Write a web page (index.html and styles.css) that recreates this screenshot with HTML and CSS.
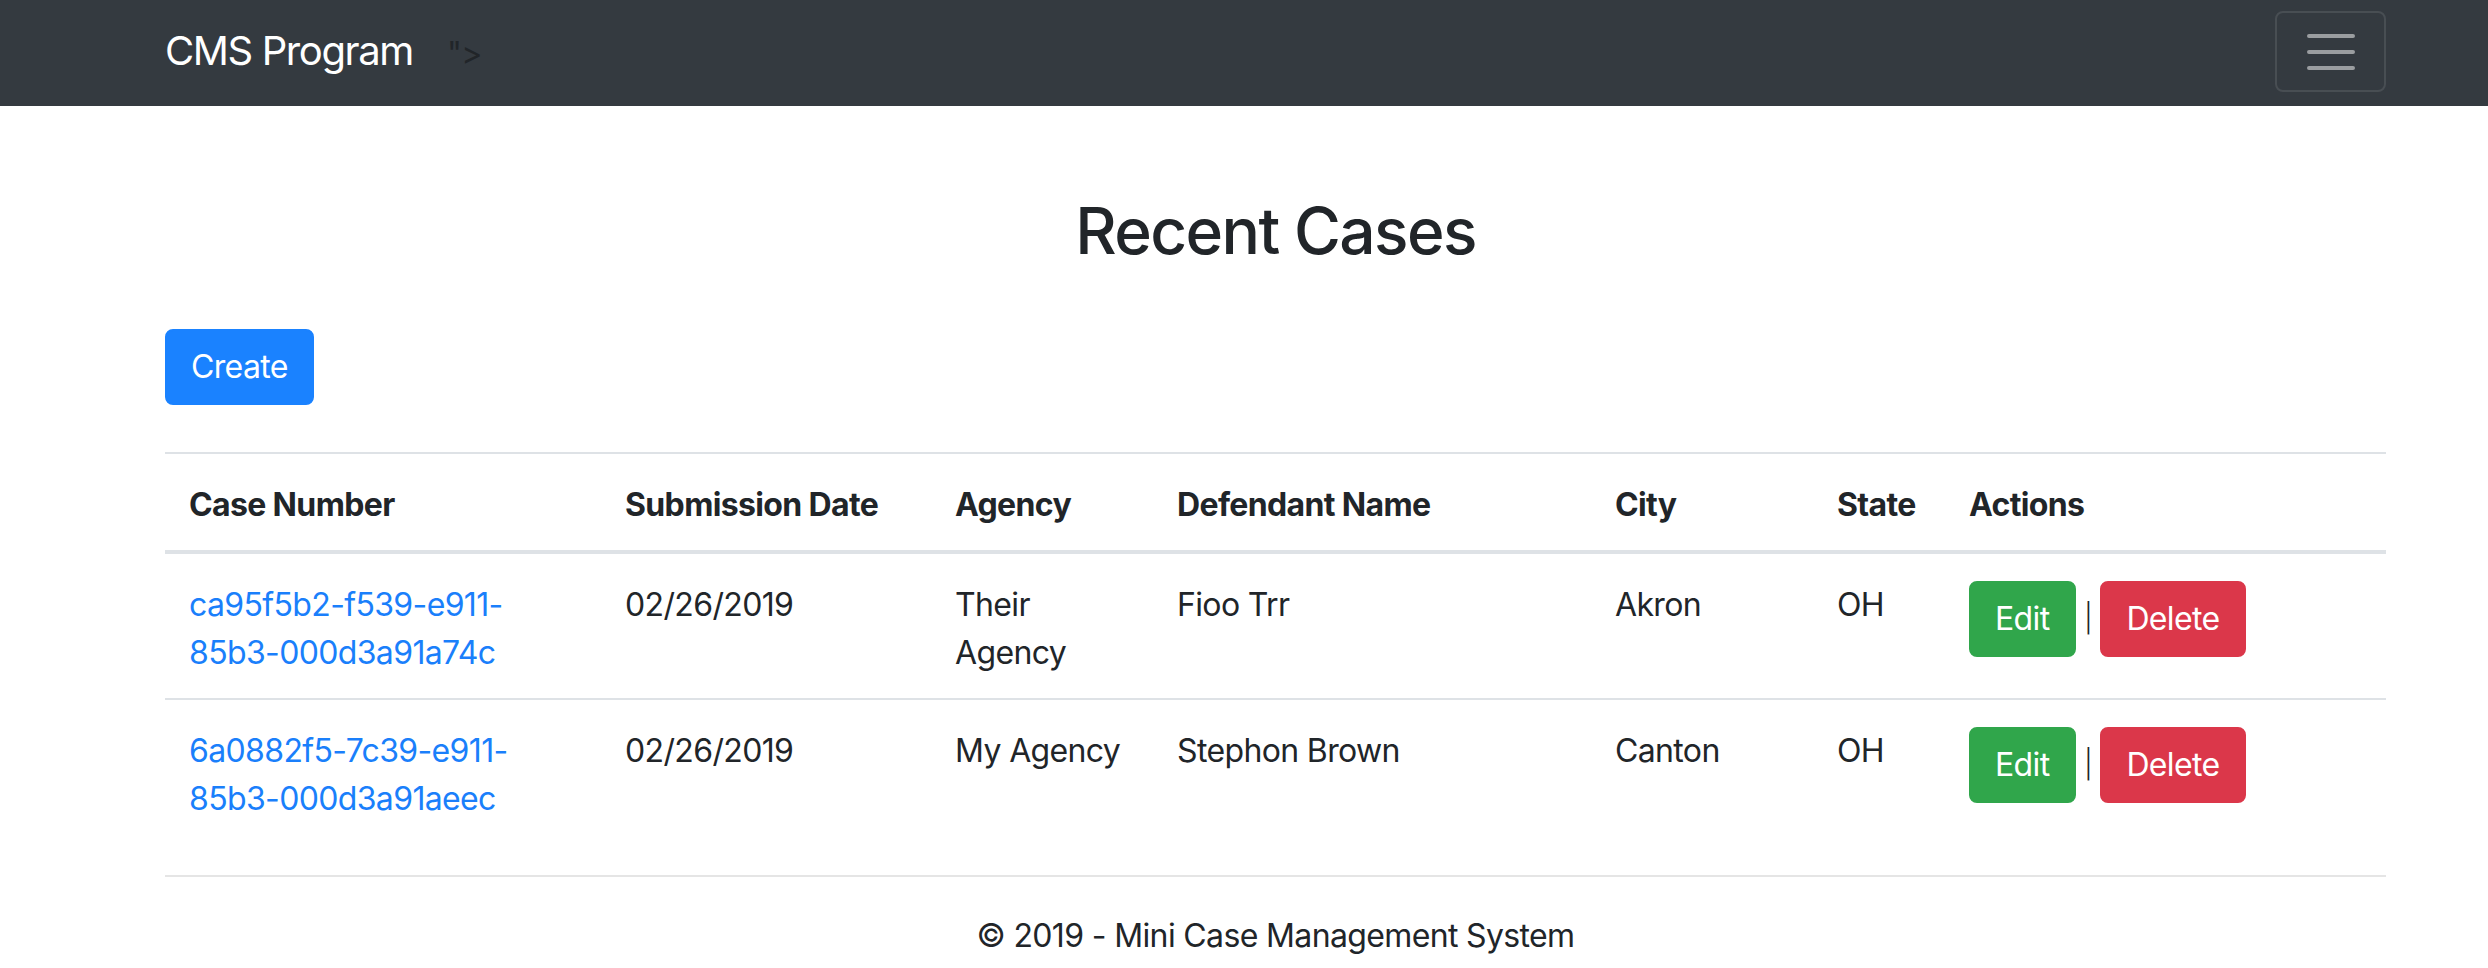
FILE: index.html
```html
<!DOCTYPE html>
<html lang="en">
<head>
<meta charset="utf-8">
<title>CMS Program</title>
<link rel="stylesheet" href="styles.css">
</head>
<body>
<nav class="navbar">
  <div class="nav-inner">
    <div class="nav-left">
      <a class="brand" href="#">CMS Program</a>
      <span class="stray">"&gt;</span>
    </div>
    <button class="toggler" type="button" aria-label="Toggle navigation">
      <svg class="toggler-icon" viewBox="0 0 30 30" width="60" height="60"><path d="M4 7h22M4 15h22M4 23h22" stroke="rgba(255,255,255,0.5)" stroke-width="2" stroke-linecap="round" stroke-miterlimit="10" fill="none"/></svg>
    </button>
  </div>
</nav>
<main class="container">
  <h2 class="title">Recent Cases</h2>
  <div class="toolbar"><a class="btn btn-primary" href="#">Create</a></div>
  <table class="cases">
    <colgroup>
      <col class="c-num"><col class="c-date"><col class="c-agency"><col class="c-name"><col class="c-city"><col class="c-state"><col class="c-actions">
    </colgroup>
    <thead>
      <tr>
        <th>Case Number</th>
        <th>Submission Date</th>
        <th>Agency</th>
        <th>Defendant Name</th>
        <th>City</th>
        <th>State</th>
        <th>Actions</th>
      </tr>
    </thead>
    <tbody>
      <tr>
        <td><a class="link" href="#">ca95f5b2-f539-e911-85b3-000d3a91a74c</a></td>
        <td>02/26/2019</td>
        <td>Their Agency</td>
        <td>Fioo Trr</td>
        <td>Akron</td>
        <td>OH</td>
        <td><a class="btn btn-success" href="#">Edit</a> <span class="sep">|</span> <a class="btn btn-danger" href="#">Delete</a></td>
      </tr>
      <tr>
        <td><a class="link" href="#">6a0882f5-7c39-e911-85b3-000d3a91aeec</a></td>
        <td>02/26/2019</td>
        <td>My Agency</td>
        <td>Stephon Brown</td>
        <td>Canton</td>
        <td>OH</td>
        <td><a class="btn btn-success" href="#">Edit</a> <span class="sep">|</span> <a class="btn btn-danger" href="#">Delete</a></td>
      </tr>
    </tbody>
  </table>
</main>
<footer class="footer">
  <div class="footer-inner">&copy; 2019 - Mini Case Management System</div>
</footer>
</body>
</html>
```
FILE: styles.css
```css
* { box-sizing: border-box; }

body {
  margin: 0;
  font-family: Inter, "Liberation Sans", Arial, sans-serif;
  font-size: 32px;
  line-height: 48px;
  letter-spacing: -0.02em;
  color: #212529;
  background: #fff;
}

.navbar {
  background: #343a40;
  height: 106px;
}

.nav-inner {
  margin-left: 165px;
  width: 2221px;
  height: 106px;
  display: flex;
  align-items: center;
  justify-content: space-between;
}

.nav-left {
  display: flex;
  align-items: baseline;
  padding-bottom: 4px;
}

.brand {
  color: #fff;
  font-size: 40px;
  line-height: 60px;
  letter-spacing: -0.035em;
  text-decoration: none;
  margin-right: 34px;
}

.stray {
  color: #212529;
  font-size: 32px;
}

.toggler {
  display: flex;
  align-items: center;
  justify-content: center;
  width: 111px;
  height: 81px;
  padding: 0;
  background: transparent;
  border: 2px solid rgba(255, 255, 255, 0.1);
  border-radius: 8px;
  margin-bottom: 3px;
}

.toggler-icon { display: block; }

.container {
  margin-left: 165px;
  width: 2221px;
}

.title {
  margin: 86px 0 0;
  font-size: 64px;
  line-height: 77px;
  font-weight: 500;
  letter-spacing: -0.025em;
  text-align: center;
}

.toolbar {
  margin-top: 60px;
}

.btn {
  display: inline-block;
  vertical-align: middle;
  padding: 12px 24px;
  border: 2px solid transparent;
  border-radius: 8px;
  font-size: 32px;
  line-height: 48px;
  color: #fff;
  text-decoration: none;
}

.btn-primary { background: #1a82ff; border-color: #1a82ff; }
.btn-success { background: #30a64b; border-color: #30a64b; }
.btn-danger { background: #db374a; border-color: #db374a; }

.sep {
  font-size: 28px;
  font-weight: 300;
}

.cases {
  margin-top: 47px;
  width: 100%;
  border-collapse: collapse;
  table-layout: fixed;
}

.c-num { width: 436px; }
.c-date { width: 330px; }
.c-agency { width: 222px; }
.c-name { width: 438px; }
.c-city { width: 222px; }
.c-state { width: 132px; }
.c-actions { width: 441px; }

.cases th {
  text-align: left;
  font-weight: 700;
  padding: 27px 24px 21px;
  vertical-align: bottom;
  border-top: 2px solid #dee2e6;
  border-bottom: 4px solid #dee2e6;
}

.cases td {
  padding: 27px 24px 21px;
  vertical-align: top;
  border-top: 2px solid #dee2e6;
}

.link {
  color: #1a7ffb;
  text-decoration: none;
}

.footer {
  margin-left: 165px;
  width: 2221px;
  margin-top: 31px;
  border-top: 2px solid #e5e5e5;
}

.footer-inner {
  padding-top: 35px;
  text-align: center;
}
```
